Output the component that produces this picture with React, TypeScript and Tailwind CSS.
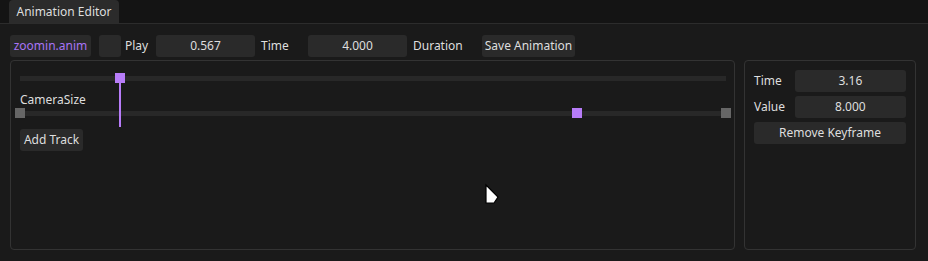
import React from "react";

const field = "h-[22px] rounded-[3px] bg-[#2a2a2a] flex items-center justify-center";

function Cursor() {
  return (
    <svg
      className="absolute left-[484px] top-[183px]"
      width="16"
      height="22"
      viewBox="0 0 16 22"
    >
      <polygon points="2,2 14,14 10,20 2,20" fill="#ffffff" stroke="#000000" strokeWidth="1.2" />
    </svg>
  );
}

export default function App() {
  return (
    <div
      className="relative w-[928px] h-[261px] bg-[#1a1a1a] text-[12px] text-[#dedede] overflow-hidden"
      style={{ fontFamily: '"Noto Sans", "Open Sans", sans-serif' }}
    >
      {/* tab strip */}
      <div className="h-[24px] bg-[#141414] border-b border-[#2c2c2c] flex items-end pl-[9px]">
        <div className="h-[23px] w-[110px] bg-[#2b2b2b] rounded-t-[4px] flex items-center justify-center pt-[1px]">
          Animation Editor
        </div>
      </div>

      {/* toolbar */}
      <div className="mt-[10px] ml-[10px] h-[23px] flex items-center">
        <div className={`${field} w-[81px] text-[#a874f5]`}>zoomin.anim</div>
        <div className="ml-[8px] w-[22px] h-[22px] rounded-[3px] bg-[#2a2a2a]" />
        <span className="ml-[4px] w-[31px] shrink-0">Play</span>
        <div className={`${field} w-[99px] shrink-0`}>0.567</div>
        <span className="ml-[6px] w-[47px] shrink-0">Time</span>
        <div className={`${field} w-[99px] shrink-0`}>4.000</div>
        <span className="ml-[6px] w-[69px] shrink-0">Duration</span>
        <div className={`${field} w-[93px] shrink-0`}>Save Animation</div>
      </div>

      <div className="mt-[3px] ml-[10px] flex gap-[9px]">
        {/* timeline panel */}
        <div className="relative w-[725px] h-[190px] border border-[#333333] rounded-[4px] pl-[9px]">
          <div className="mt-[12px] h-[10px] flex items-center">
            <div className="w-[706px] h-[5px] bg-[#282828]" />
          </div>
          <div className="mt-[9px] h-[16px] leading-[16px]">CameraSize</div>
          <div className="relative -ml-[5px] w-[716px] h-[10px]">
            <div className="absolute left-[5px] right-[5px] top-[3px] h-[5px] bg-[#282828]" />
            <div className="absolute left-0 top-0 w-[10px] h-[10px] bg-[#666666]" />
            <div className="absolute left-[557px] top-0 w-[10px] h-[10px] bg-[#b77cf8]" />
            <div className="absolute right-0 top-0 w-[10px] h-[10px] bg-[#666666]" />
          </div>
          <div className={`${field} mt-[11px] w-[63px]`}>Add Track</div>

          {/* playhead */}
          <div className="absolute left-[104px] top-[12px] w-[10px] h-[10px] bg-[#b77cf8]" />
          <div className="absolute left-[108px] top-[22px] w-[2px] h-[44px] bg-[#b77cf8]" />
        </div>

        {/* keyframe panel */}
        <div className="w-[172px] h-[190px] border border-[#333333] rounded-[4px] px-[9px] pt-[9px] flex flex-col gap-[4px]">
          <div className="flex items-center h-[22px]">
            <span className="w-[41px]">Time</span>
            <div className={`${field} w-[112px]`}>3.16</div>
          </div>
          <div className="flex items-center h-[22px]">
            <span className="w-[41px]">Value</span>
            <div className={`${field} w-[112px]`}>8.000</div>
          </div>
          <div className={`${field} w-[152px]`}>Remove Keyframe</div>
        </div>
      </div>

      <Cursor />
    </div>
  );
}
